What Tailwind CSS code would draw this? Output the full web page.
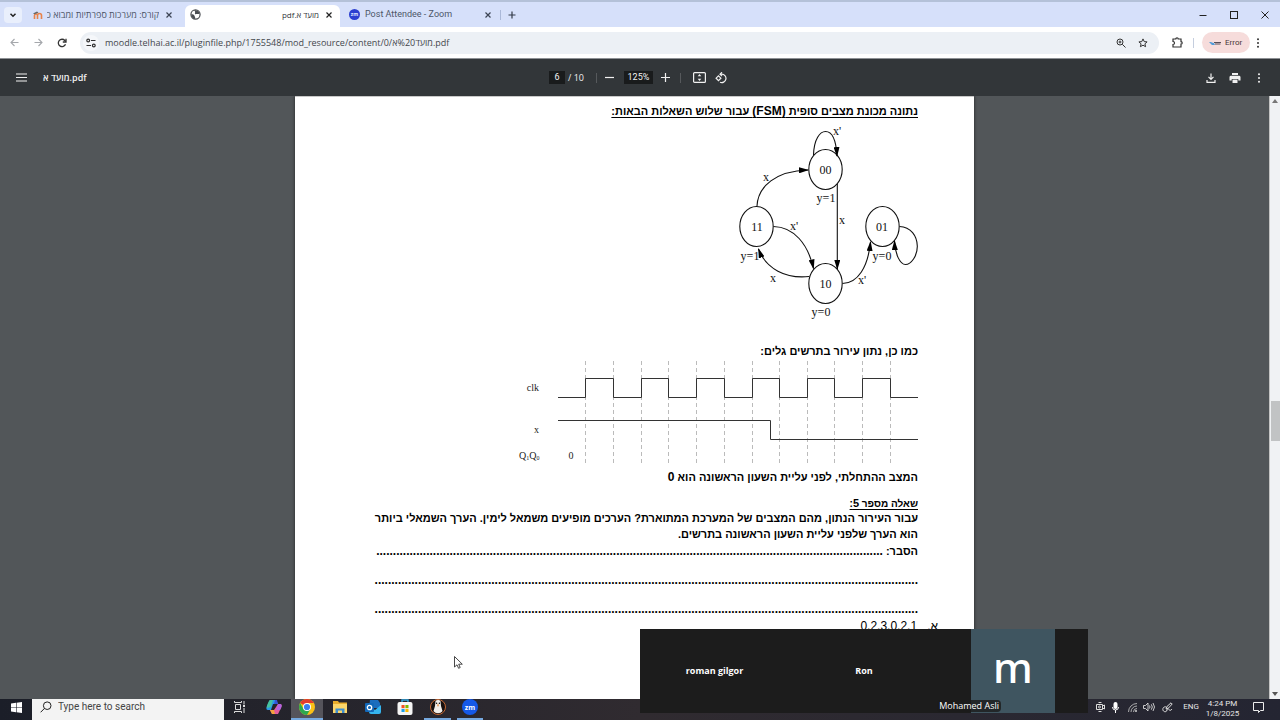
<!DOCTYPE html>
<html lang="en">
<head>
<meta charset="utf-8">
<title>מועד א.pdf</title>
<script src="https://cdn.jsdelivr.net/npm/@tailwindcss/browser@4"></script>
</head>
<body class="relative flex h-screen flex-col overflow-hidden bg-[#525659] font-['Open_Sans','Noto_Sans',sans-serif] text-[#33363b]">

<!-- Tab strip -->
<header class="flex h-[27px] shrink-0 items-stretch border-t-2 border-[#b4c1d8] bg-[#d6e0fa] text-[9px]">
  <div class="flex items-center pl-1">
    <button aria-label="Search tabs" class="flex h-4 w-[18px] items-center justify-center rounded bg-[#e9effc]">
      <svg class="size-2" viewBox="0 0 8 8" fill="none" stroke="#222" stroke-width="1.5"><path d="M1.5 2.8 4 5.3l2.500-2.500"/></svg>
    </button>
  </div>
  <div class="flex w-[163px] items-center gap-1 pr-[10px] pl-[11px]">
    <svg class="size-[10px] shrink-0" viewBox="0 0 10 10" fill="none"><path d="M1.500 9V5.500a1.500 1.500 0 0 1 3 0V9M4.500 9V5.500a2 2 0 0 1 4 0V9" stroke="#e8834a" stroke-width="1.600"/><path d="M0 3.500 4 1.500 5.500 2.800 1.500 4.300z" fill="#666"/></svg>
    <a href="#" dir="rtl" class="w-[113px] overflow-hidden whitespace-nowrap text-[#4d5668]">קורס: מערכות ספרתיות ומבוא כ</a>
    <button aria-label="Close tab" class="ml-auto flex size-3 items-center justify-center"><svg class="size-2" viewBox="0 0 8 8" stroke="#3c4454" stroke-width="1.200"><path d="m1.500 1.500 5 5m0-5-5 5"/></svg></button>
  </div>
  <div class="mt-[3px] flex w-[155px] items-center rounded-t-md bg-white pr-[5px] pb-[3px] pl-[5px]">
    <svg class="size-[11px] shrink-0" viewBox="0 0 12 12"><circle cx="6" cy="6" r="5" fill="#fff" stroke="#4a4d52" stroke-width="1.300"/><path d="M1.500 5.500C3 6 4.500 6 5 7.500S6 9 5.500 11C2.500 10.500 1 8 1.500 5.500zM5 1.200l2 .3 2 .8 1.600 2.200C9.500 6 8 5.200 7 5.500S5 5.500 5.500 4 4.500 2.500 5 1.200z" fill="#4a4d52"/></svg>
    <a href="#" dir="rtl" class="mr-1 ml-auto text-[8px] whitespace-nowrap text-[#33363b]">מועד א.pdf</a>
    <button aria-label="Close tab" class="flex size-3 items-center justify-center"><svg class="size-2" viewBox="0 0 8 8" stroke="#222" stroke-width="1.200"><path d="m1.500 1.500 5 5m0-5-5 5"/></svg></button>
  </div>
  <div class="flex w-[160px] items-center pr-[6px] pl-[9px]">
    <svg class="size-[11px] shrink-0" viewBox="0 0 12 12"><circle cx="6" cy="6" r="6" fill="#2c3fd0"/><text x="6" y="8" text-anchor="middle" font-size="5.500" font-weight="700" fill="#dfe6ff" font-family="Open Sans">zm</text></svg>
    <a href="#" class="ml-[5px] font-['Roboto'] whitespace-nowrap text-[#4d5668]">Post Attendee - Zoom</a>
    <button aria-label="Close tab" class="ml-auto flex size-3 items-center justify-center"><svg class="size-2" viewBox="0 0 8 8" stroke="#3c4454" stroke-width="1.200"><path d="m1.500 1.500 5 5m0-5-5 5"/></svg></button>
  </div>
  <div class="flex items-center gap-[5px]">
    <span class="h-[10px] w-px bg-[#aab8d8]"></span>
    <button aria-label="New tab" class="flex size-3 items-center justify-center"><svg class="size-2" viewBox="0 0 8 8" stroke="#333a48" stroke-width="1.200"><path d="M4 .5v7M.5 4h7"/></svg></button>
  </div>
  <div class="ml-auto flex items-center gap-[19px] pr-[9px]">
    <button aria-label="Minimize" class="flex size-3 items-center justify-center"><svg class="size-2" viewBox="0 0 8 8" stroke="#222"><path d="M.5 4.500h7"/></svg></button>
    <button aria-label="Maximize" class="flex size-3 items-center justify-center"><svg class="size-2" viewBox="0 0 8 8" fill="none" stroke="#222"><rect x=".5" y=".5" width="7" height="7"/></svg></button>
    <button aria-label="Close window" class="flex size-3 items-center justify-center"><svg class="size-2" viewBox="0 0 8 8" stroke="#222"><path d="m.5.5 7 7m0-7-7 7"/></svg></button>
  </div>
</header>

<!-- Address bar -->
<nav class="flex h-8 shrink-0 items-center border-b border-[#8d9094] bg-white pr-4 pl-2">
  <button aria-label="Back" class="flex size-3 items-center justify-center"><svg class="size-[9px]" viewBox="0 0 9 9" fill="none" stroke="#a5a8ac" stroke-width="1.100"><path d="M8.500 4.500H1M4.500 1 1 4.500 4.500 8"/></svg></button>
  <button aria-label="Forward" class="ml-3 flex size-3 items-center justify-center"><svg class="size-[9px]" viewBox="0 0 9 9" fill="none" stroke="#a5a8ac" stroke-width="1.100"><path d="M.5 4.500H8M4.500 1 8 4.500 4.500 8"/></svg></button>
  <button aria-label="Reload" class="ml-3 flex size-3 items-center justify-center"><svg class="size-[10px]" viewBox="0 0 10 10" fill="none" stroke="#333" stroke-width="1.300"><path d="M8.500 6.200A3.700 3.700 0 1 1 7.800 2.500L8.800 3.600"/><path d="M9 .8v3.200H5.800"/></svg></button>
  <div class="ml-3 flex h-[22px] flex-1 items-center rounded-full bg-[#ecf0f5] pr-[10px] pl-[3px]">
    <button aria-label="Site information" class="flex size-4 items-center justify-center rounded-full bg-[#f5f7fa]"><svg class="size-[10px]" viewBox="0 0 10 10" fill="none" stroke="#333" stroke-width="1.200"><circle cx="2.200" cy="2.500" r="1.400"/><path d="M5 2.500h4.500M.5 7.500H5"/><circle cx="7.800" cy="7.500" r="1.400"/></svg></button>
    <input aria-label="Address" dir="ltr" class="ml-[6px] min-w-0 flex-1 bg-transparent text-[9px] leading-4 text-[#44474c] outline-none" value="moodle.telhai.ac.il/pluginfile.php/1755548/mod_resource/content/0/מועד%20א.pdf">
    <button aria-label="Zoom" class="flex size-3 items-center justify-center"><svg class="size-[10px]" viewBox="0 0 10 10" fill="none" stroke="#333"><circle cx="4" cy="4" r="3"/><path d="M6.300 6.300 9.500 9.500M4 2.600v2.800M2.600 4h2.800"/></svg></button>
    <button aria-label="Bookmark" class="ml-[10px] flex size-3 items-center justify-center"><svg class="size-[10px]" viewBox="0 0 10 10" fill="none" stroke="#333"><path d="m5 .9 1.200 2.700 2.900.3L6.900 5.800l.7 2.900L5 7.200 2.400 8.700l.7-2.900L.9 3.900l2.900-.3z"/></svg></button>
  </div>
  <button aria-label="Extensions" class="ml-3 flex size-3 items-center justify-center"><svg class="size-[11px]" viewBox="0 0 11 11" fill="none" stroke="#333" stroke-width="1.200"><path d="M1 2h2.800a1.200 1.200 0 0 1 2.400 0H9v2.700a1.200 1.200 0 0 1 0 2.400V10H1V7.500a1.400 1.400 0 0 0 0-3z"/></svg></button>
  <span class="mr-2 ml-[10px] h-[10px] w-px bg-[#c5cede]"></span>
  <button class="flex h-[21px] w-12 items-center gap-1 rounded-full bg-[#f6dcdb] pl-[7px] font-['Roboto'] text-[8px] text-[#493637]">
    <svg class="h-[6px] w-3" viewBox="0 0 12 6"><path d="M0 2c2 0 3 .5 5 1l1 2H3z" fill="#4f9bd8"/><path d="M5 2.500h7M6 4h5.500" stroke="#574f58"/></svg>Error
  </button>
  <button aria-label="Chrome menu" class="ml-[2px] flex size-3 items-center justify-center"><svg class="h-[10px] w-1" viewBox="0 0 4 10" fill="#333"><circle cx="2" cy="1.200" r="1"/><circle cx="2" cy="5" r="1"/><circle cx="2" cy="8.800" r="1"/></svg></button>
</nav>

<!-- PDF viewer toolbar -->
<div class="grid h-[37px] shrink-0 grid-cols-3 items-center bg-[#323639] px-[15px] text-[9px] text-[#f1f1f1]">
  <div class="flex items-center gap-4">
    <button aria-label="Menu" class="flex size-3 items-center justify-center"><svg class="size-[11px]" viewBox="0 0 11 11" stroke="#f1f1f1" stroke-width="1.200"><path d="M0 2h11M0 5.500h11M0 9h11"/></svg></button>
    <span dir="ltr" class="font-semibold">מועד א.pdf</span>
  </div>
  <div class="flex items-center justify-center pr-1">
    <input aria-label="Page number" value="6" class="h-[13px] w-4 bg-[#191b1c] text-center font-['Roboto'] outline-none">
    <span class="ml-[3px]">/ 10</span>
    <span class="ml-3 h-[10px] w-px bg-[#56595c]"></span>
    <button aria-label="Zoom out" class="ml-[7px] flex size-3 items-center justify-center"><svg class="size-[9px]" viewBox="0 0 9 9" stroke="#f1f1f1" stroke-width="1.200"><path d="M0 4.500h9"/></svg></button>
    <input aria-label="Zoom level" value="125%" class="ml-2 h-[13px] w-[29px] bg-[#191b1c] text-center font-['Roboto'] outline-none">
    <button aria-label="Zoom in" class="ml-[7px] flex size-3 items-center justify-center"><svg class="size-[9px]" viewBox="0 0 9 9" stroke="#f1f1f1" stroke-width="1.200"><path d="M0 4.500h9M4.500 0v9"/></svg></button>
    <span class="ml-2 h-[10px] w-px bg-[#56595c]"></span>
    <button aria-label="Fit to page" class="ml-3 flex h-3 w-[13px] items-center justify-center"><svg class="h-[11px] w-[13px]" viewBox="0 0 13 11"><rect x=".6" y=".6" width="11.800" height="9.800" rx="1" fill="none" stroke="#f1f1f1" stroke-width="1.200"/><path d="M6.500 2 8.300 4.200H4.700zM6.500 9 4.700 6.800h3.600z" fill="#f1f1f1"/></svg></button>
    <button aria-label="Rotate" class="ml-[9px] flex size-3 items-center justify-center"><svg class="size-3" viewBox="0 0 12 12" fill="none" stroke="#f1f1f1" stroke-width="1.200"><path d="M3.500 3.800 5.900 6.200 3.500 8.600 1.100 6.200zM5.300 2.200H6.500A4.200 4.200 0 1 1 5 10.200M7 .2 5 2.200 7 4.200"/></svg></button>
  </div>
  <div class="flex items-center justify-end gap-3">
    <button aria-label="Download" class="flex size-3 items-center justify-center"><svg class="size-[10px]" viewBox="0 0 10 10" fill="none" stroke="#f1f1f1" stroke-width="1.200"><path d="M5 .5V6M2.500 3.800 5 6.300l2.500-2.500M1 7v2.300h8V7"/></svg></button>
    <button aria-label="Print" class="flex size-3 items-center justify-center"><svg class="size-3" viewBox="0 0 12 12" fill="#f1f1f1"><path d="M3 1h6v2H3zM2 3.700h8A1.500 1.500 0 0 1 11.500 5v3.500H9.300V7H2.700v1.500H.5V5A1.500 1.500 0 0 1 2 3.700z"/><path d="M3.500 7.600h5V11h-5z"/></svg></button>
    <button aria-label="More actions" class="flex size-3 items-center justify-center"><svg class="h-[10px] w-1" viewBox="0 0 4 10" fill="#f1f1f1"><circle cx="2" cy="1.200" r="1"/><circle cx="2" cy="5" r="1"/><circle cx="2" cy="8.800" r="1"/></svg></button>
  </div>
</div>

<!-- Document -->
<div class="flex min-h-0 flex-1">
  <main class="flex min-w-0 flex-1 justify-center overflow-hidden">
    <article dir="rtl" class="w-[679px] max-w-full border-t border-[#c9c9c9] bg-white pt-[6px] pr-14 pl-[68px] font-['Liberation_Sans',sans-serif] text-[11px] leading-4 font-bold text-black shadow-[0_0_3px_#222]">
      <h1 class="underline underline-offset-2">נתונה מכונת מצבים סופית <span class="text-[12px]">(FSM)</span> עבור שלוש השאלות הבאות:</h1>
      <svg class="mt-[3px] block h-[200px] w-[190px] [direction:ltr]" viewBox="728 122 190 200" fill="none" stroke="#111" stroke-width="1.100">
        <defs><marker id="arrow" markerUnits="userSpaceOnUse" markerWidth="10" markerHeight="6" refX="9" refY="3" orient="auto"><path d="M0 0 10 3 0 6z" fill="#000" stroke="none"/></marker></defs>
        <ellipse cx="825.500" cy="169.500" rx="16.700" ry="20"/>
        <ellipse cx="756.500" cy="226.500" rx="16.700" ry="20"/>
        <ellipse cx="882.500" cy="226.500" rx="16.700" ry="20"/>
        <ellipse cx="825.500" cy="283.500" rx="16.700" ry="20"/>
        <g marker-end="url(#arrow)">
          <path d="M813.500 155C814 139 820 131.500 825.500 131.500S836 138 837 156"/>
          <path d="M757 206C758 186 776 171 808 170"/>
          <path d="M837.300 184V269"/>
          <path d="M773.500 226.500C794 227 808 244 813.500 268.500"/>
          <path d="M809 276.500C786 279 766 269 758.500 249"/>
          <path d="M842.500 283.500C858 283 868 267 870.500 242"/>
          <path d="M899.500 226.500C911 227 917 236 917.300 246C917.500 256 911 264.500 905.500 264.500C900 264.500 895 254 894.500 241"/>
        </g>
        <g fill="#111" stroke="none" font-family="Liberation Serif" font-size="12" font-weight="400" text-anchor="middle">
          <text x="825.500" y="174">00</text><text x="757" y="231">11</text><text x="882" y="231">01</text><text x="825.500" y="288">10</text>
          <text x="826" y="202">y=1</text><text x="750" y="260">y=1</text><text x="882" y="260">y=0</text><text x="821" y="316">y=0</text>
          <text x="837" y="135">x'</text><text x="766" y="181">x</text><text x="794" y="230">x'</text><text x="842" y="224">x</text><text x="773" y="282">x</text><text x="862" y="284">x'</text>
        </g>
      </svg>
      <p class="mt-[21px]">כמו כן, נתון עירור בתרשים גלים:</p>
      <svg class="block h-[106px] w-[403px] [direction:ltr]" viewBox="515 359 403 106" fill="none" stroke="#333">
        <path stroke="#bbb" stroke-dasharray="4 3" d="M585.500 361V463M613.500 361V463M641.500 361V463M668.500 361V463M696.500 361V463M724.500 361V463M752.500 361V463M779.500 361V463M807.500 361V463M834.500 361V463M862.500 361V463M890.500 361V463"/>
        <path d="M558 397.500H585.500V378.500H613.500V397.500H641.500V378.500H668.500V397.500H696.500V378.500H724.500V397.500H752.500V378.500H779.500V397.500H807.500V378.500H834.500V397.500H862.500V378.500H890.500V397.500H918"/>
        <path d="M558 420.500H770.500V439.500H918"/>
        <g fill="#222" stroke="none" font-family="Liberation Serif" font-size="10" font-weight="400" text-anchor="end">
          <text x="539" y="391">clk</text><text x="539" y="433">x</text>
          <text x="539.500" y="459">Q<tspan font-size="6" dy="1">1</tspan><tspan dy="-1">Q</tspan><tspan font-size="6" dy="1">0</tspan></text>
          <text x="573.500" y="459">0</text>
        </g>
      </svg>
      <p class="mt-1">המצב ההתחלתי, לפני עליית השעון הראשונה הוא <span class="text-[12px]">0</span></p>
      <h2 class="mt-3 text-[10px] leading-[13px] underline underline-offset-2">שאלה מספר <span class="text-[11px]">5</span>:</h2>
      <p>עבור העירור הנתון, מהם המצבים של המערכת המתוארת? הערכים מופיעים משמאל לימין. הערך השמאלי ביותר<br>הוא הערך שלפני עליית השעון הראשונה בתרשים.</p>
      <div class="pt-px text-[12px]">
        <p class="flex pl-3"><span class="text-[11px]">הסבר:&nbsp;</span><span class="min-w-0 flex-1 overflow-hidden whitespace-nowrap">........................................................................................................................................................</span></p>
        <p class="mt-[13px] whitespace-nowrap">...................................................................................................................................................................</p>
        <p class="mt-[13px] whitespace-nowrap">...................................................................................................................................................................</p>
        <p class="mt-px -mr-5 flex gap-[10px] font-normal"><span>א.</span><span dir="ltr">0,2,3,0,2,1</span></p>
      </div>
    </article>
  </main>
  <!-- Scroll bar -->
  <div class="flex w-[11px] shrink-0 flex-col items-center justify-between border-l border-[#c4c4c4] bg-[#f0f2f4] py-[3px]">
    <svg class="h-1 w-[6px]" viewBox="0 0 6 4" fill="#777"><path d="M3 0 6 4H0z"/></svg>
    <div class="mt-[46px] h-10 w-[9px] bg-[#c1c3c4]"></div>
    <svg class="h-1 w-[6px]" viewBox="0 0 6 4" fill="#555"><path d="M3 4 6 0H0z"/></svg>
  </div>
</div>

<!-- Taskbar -->
<footer class="flex h-[21px] shrink-0 items-stretch overflow-hidden bg-linear-to-r from-[#1b1e28] via-[#302b30] to-[#242532] text-[10px]">
  <button aria-label="Start" class="flex w-8 items-center justify-center pb-[5px]"><svg class="size-[11px]" viewBox="0 0 11 11" fill="#fff"><path d="M0 1.500 5 .8v4.400H0zM5.600.7 11 0v5.200H5.600zM0 5.800h5v4.400L0 9.500zM5.600 5.800H11V11l-5.400-.7z"/></svg></button>
  <label class="flex w-48 items-center gap-[6px] bg-[#f3f3f3] pb-[5px] pl-2">
    <svg class="size-3 shrink-0" viewBox="0 0 12 12" fill="none" stroke="#222"><circle cx="7.200" cy="4.700" r="3.800"/><path d="M4.500 7.400.6 11.300"/></svg>
    <input aria-label="Search" placeholder="Type here to search" class="min-w-0 flex-1 bg-transparent font-['Roboto'] leading-4 outline-none placeholder:text-[#444]">
  </label>
  <button aria-label="Task view" class="flex w-8 items-center justify-center pb-[5px]"><svg class="size-3" viewBox="0 0 12 12" fill="none" stroke="#ddd"><path d="M.5 0v1.500h7V0M1.500 3.500h5v5h-5zM.5 12v-1.500h7V12M10 0v3.500M10 7v5"/><path d="M9 5h2" stroke-width="2"/></svg></button>
  <button aria-label="Copilot" class="flex w-[35px] items-center justify-center pb-[5px]"><svg class="size-4" viewBox="0 0 16 16"><path d="M4 1h6l2 4H7L5 11H2C0 11 0 9 1 7z" fill="#2b9be8"/><path d="M4 1h3L5 8 1 9C0 8 3 1 4 1z" fill="#46c3a0"/><path d="M9 1h2l1 4H8z" fill="#3556d8"/><path d="M12 5h2c2 0 2 2 1 4l-3 6H6l-2-4h4z" fill="#e45c9c"/><path d="M12 5h2c2 0 2 2 1 4l-1 2h-4z" fill="#b266e0"/><path d="M4 11h4l1 4H6z" fill="#f2a33a"/></svg></button>
  <button aria-label="Chrome" class="flex w-8 items-center justify-center border-b-2 border-[#76a9e0] bg-[#55545b] pb-[3px]"><svg class="size-4" viewBox="0 0 16 16"><circle cx="8" cy="8" r="8" fill="#fbc116"/><path d="M8 8 1.100 4A8 8 0 0 1 14.900 4H8z" fill="#e33b2e"/><path d="M1.100 4A8 8 0 0 0 8 16l3.500-6H4.500z" fill="#2da94f"/><circle cx="8" cy="8" r="4" fill="#fff"/><circle cx="8" cy="8" r="3.100" fill="#3b7ded"/></svg></button>
  <button aria-label="File Explorer" class="flex w-[34px] items-center justify-center pb-[5px]"><svg class="h-3 w-4" viewBox="0 0 16 12"><path d="M1 0h5l1 1.500h8V12H1z" fill="#e9ad2c"/><path d="M1 3h14v9H1z" fill="#fbd66b"/><path d="M3.500 12V7.500h9V12h-2.500V9.500H6V12z" fill="#3f8fd0"/></svg></button>
  <button aria-label="Outlook" class="flex w-8 items-center justify-center pb-[5px]"><svg class="h-[14px] w-4" viewBox="0 0 16 14"><path d="M5 0h8l2 3v5H4z" fill="#1b6dbd"/><path d="M4 6l6 4 6-5v7a2 2 0 0 1-2 2H6a2 2 0 0 1-2-2z" fill="#35b4ee"/><rect y="3" width="9" height="9" rx="1" fill="#1268b8"/><circle cx="4.500" cy="7.500" r="2.200" fill="none" stroke="#fff" stroke-width="1.300"/></svg></button>
  <button aria-label="Microsoft Store" class="flex w-8 items-center justify-center pb-[5px]"><svg class="size-4" viewBox="0 0 16 16"><path d="M5 4V1h6v3" fill="none" stroke="#35a8e0" stroke-width="1.400"/><rect x=".5" y="3" width="15" height="13" rx="2" fill="#f5f5f5"/><path d="M4.500 6H7.600V9.100H4.500z" fill="#f05325"/><path d="M8.400 6h3.100v3.100H8.400z" fill="#7eb900"/><path d="M4.500 9.900H7.600V13H4.500z" fill="#1a9fe8"/><path d="M8.400 9.900h3.100V13H8.400z" fill="#fbb800"/></svg></button>
  <button aria-label="Assistant" class="mx-[3px] flex w-[27px] items-center justify-center border-b-2 border-[#76a9e0] pb-[3px]"><svg class="size-4" viewBox="0 0 16 16"><circle cx="8" cy="8" r="7.500" fill="#16100f" stroke="#c66a35"/><path d="M5.500 2c1.500-1.500 4-1 5 0l.5 5 1.500 5c-2 3-7 3-9 0L5 7z" fill="#f2eee9"/><path d="M7 5.500h2L8 8z" fill="#dd7b2a"/><circle cx="6.600" cy="4.300" r=".7"/><circle cx="9.400" cy="4.300" r=".7"/></svg></button>
  <button aria-label="Zoom" class="mx-[3px] flex w-[26px] items-center justify-center border-b-2 border-[#76a9e0] pb-[3px]"><svg class="size-4" viewBox="0 0 16 16"><circle cx="8" cy="8" r="8" fill="#1559e8"/><text x="8" y="10.500" text-anchor="middle" font-family="Open Sans" font-size="7" font-weight="700" fill="#fff">zm</text></svg></button>
  <div class="ml-auto flex items-center gap-[6px] pr-4 pb-[5px] font-['Roboto'] text-[8px] text-[#e6e6e6]">
    <svg class="h-[10px] w-[9px]" viewBox="0 0 9 10" fill="none" stroke="#ddd"><path d="M2.500.5h3M.5 2.500h6v5h-6zM6.500 4l2-1v4l-2-1M2.500 9.500h3"/><circle cx="3.500" cy="5" r="1"/></svg>
    <svg class="h-[11px] w-[9px]" viewBox="0 0 9 11"><rect x="2.500" width="4" height="7" rx="2" fill="#fff"/><path d="M1.500 5a3 3 0 0 0 6 0M4.500 8v3" fill="none" stroke="#fff"/></svg>
    <svg class="ml-[2px] size-[9px]" viewBox="0 0 9 9" fill="none" stroke="#bbb" stroke-width=".9"><path d="M.5 9A8.500 8.500 0 0 1 9 .5M3 9A6 6 0 0 1 9 3M5.500 9A3.500 3.500 0 0 1 9 5.500"/><circle cx="8" cy="8" r=".7" fill="#fff"/></svg>
    <svg class="h-[10px] w-3" viewBox="0 0 12 10" fill="none" stroke="#ddd" stroke-width=".9"><path d="M.5 3.500h2L5 1v8L2.500 6.500h-2zM6.500 3.500q1 1.500 0 3M8.300 2.300q2 2.700 0 5.400M10 1q3 4 0 8"/></svg>
    <svg class="ml-px size-[11px]" viewBox="0 0 11 11" fill="none" stroke="#ddd"><path d="m4 7 1-2.500L9 .8l1.200 1.200L6.500 6zM4.500 5C1 4 0 7.500 1.500 9S5 9.500 5 8s1.500-2 2-.5 2 1 3-.5"/></svg>
    <button class="ml-1">ENG</button>
    <div class="mr-[7px] w-[35px] pt-[3px] text-center leading-[10px] whitespace-nowrap"><div>4:24 PM</div><div>1/8/2025</div></div>
    <button aria-label="Notifications"><svg class="size-[11px]" viewBox="0 0 11 11" fill="none" stroke="#eee"><path d="M.5.5h10v8H7.500l-2 2v-2h-5z"/></svg></button>
  </div>
</footer>

<!-- Floating meeting panel -->
<section class="absolute right-[192px] bottom-[7px] flex h-[84px] w-[448px] items-stretch bg-[#1c1c1c] text-[9px] text-white">
  <div class="flex w-[149px] items-center justify-center font-bold">roman gilgor</div>
  <div class="flex w-[150px] items-center justify-center font-bold">Ron</div>
  <div class="relative ml-8 flex w-[84px] items-center justify-center bg-[#3f5560]">
    <span class="pb-2 font-['Noto_Sans',sans-serif] text-[42px] leading-none font-medium">m</span>
    <span class="absolute right-[54px] bottom-[1px] rounded-sm bg-[#1c1c1c]/80 px-[2px] leading-3 whitespace-nowrap">Mohamed Asli</span>
  </div>
</section>

<!-- Mouse pointer -->
<svg class="absolute top-[656px] left-[454px] h-[13px] w-[9px]" viewBox="0 0 9 13"><path d="M.5.5v10.500L3 8.800l1.600 3.500 1.600-.8-1.500-3.300h3.600z" fill="#fff" stroke="#333" stroke-width=".9"/></svg>
</body>
</html>
